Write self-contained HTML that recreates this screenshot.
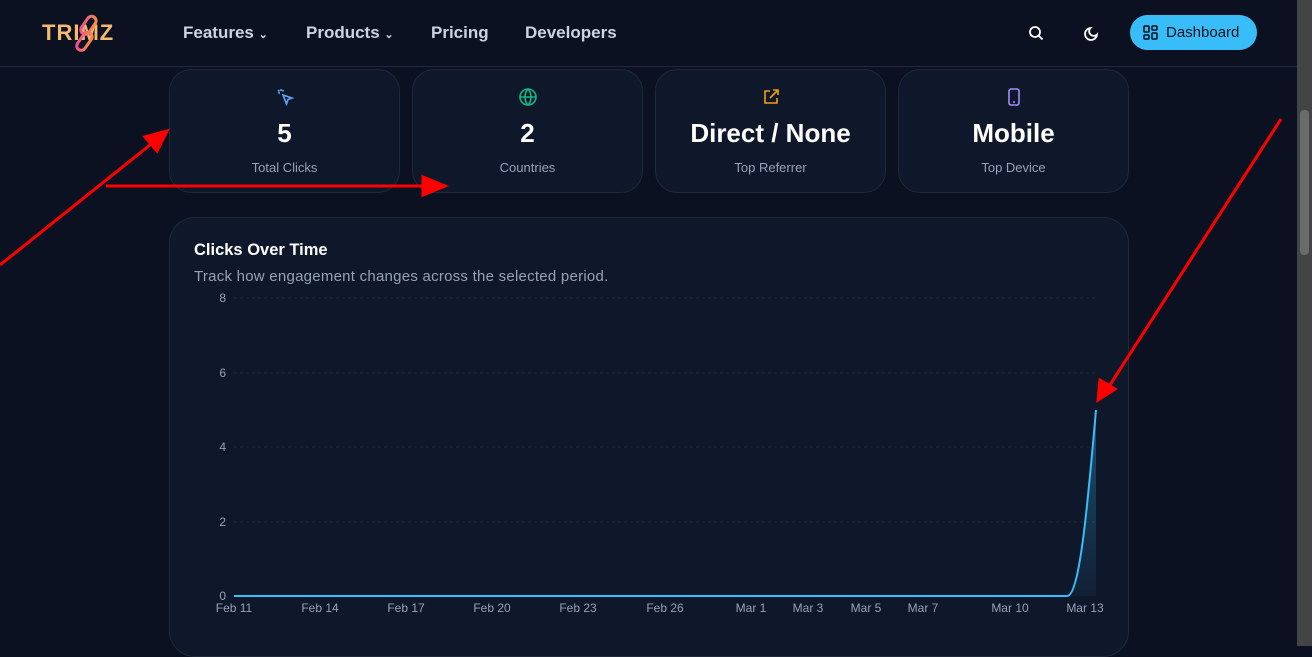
<!DOCTYPE html>
<html><head><meta charset="utf-8"><style>
*{box-sizing:border-box;margin:0;padding:0}
body{width:1312px;height:646px;overflow:hidden;background:#0b1120;font-family:"Liberation Sans",sans-serif;position:relative;color:#fff}
.hdr{position:absolute;left:0;top:0;width:1297px;height:67px;border-bottom:1px solid #1e293b;background:#0b1120}
.logo{position:absolute;left:42px;top:20px;font-weight:bold;font-size:22px;color:#f5b971;letter-spacing:1px}
.nav{position:absolute;top:23px;font-size:17px;color:#cbd5e1;font-weight:bold}
.btn{position:absolute;left:1130px;top:15px;width:127px;height:35px;border-radius:18px;background:#38bdf8;color:#0b1120;font-size:15px;line-height:35px;padding-left:36px}
.card{position:absolute;top:69px;width:231px;height:124px;border:1px solid #1f2937;border-radius:22px;background:#0f172a;text-align:center}
.card .v{position:absolute;top:48px;width:100%;font-size:26px;font-weight:bold}
.card .l{position:absolute;top:90px;width:100%;font-size:13px;color:#94a3b8}
.card svg{position:absolute;top:18px;left:50%;margin-left:-9px}
.chart{position:absolute;left:169px;top:217px;width:960px;height:440px;border:1px solid #1f2937;border-radius:26px;background:#0f172a}
.sb{position:absolute;left:1297px;top:0;width:15px;height:646px;background:#444}
.th{position:absolute;left:1300px;top:110px;width:9px;height:145px;background:#6b6b6b;border-radius:4px}
</style></head><body>
<div class="hdr">
<div class="logo">TRIMZ</div>
<svg style="position:absolute;left:72px;top:14px" width="34" height="40"><defs><linearGradient id="lg" x1="0" y1="1" x2="1" y2="0"><stop offset="0" stop-color="#ec4899"/><stop offset="1" stop-color="#fb923c"/></linearGradient></defs><g fill="none" stroke="url(#lg)" stroke-width="3"><rect x="12" y="1" width="9" height="20" rx="4.5" transform="rotate(35 16 11)"/><rect x="8" y="17" width="9" height="20" rx="4.5" transform="rotate(35 12 27)"/></g></svg>
<div class="nav" style="left:183px">Features <span style="font-size:11px">⌄</span></div>
<div class="nav" style="left:306px">Products <span style="font-size:11px">⌄</span></div>
<div class="nav" style="left:431px">Pricing</div>
<div class="nav" style="left:525px">Developers</div>
<svg style="position:absolute;left:1028px;top:25px" width="16" height="16" fill="none" stroke="#fff" stroke-width="1.8"><circle cx="7" cy="7" r="5"/><path d="M11 11l3.5 3.5"/></svg>
<svg style="position:absolute;left:1084px;top:25px" width="16" height="16" fill="none" stroke="#fff" stroke-width="1.8"><path d="M13 9.5A6 6 0 1 1 6.5 3a4.5 4.5 0 0 0 6.5 6.5z"/></svg>
<div class="btn"><svg style="position:absolute;left:13px;top:10px" width="15" height="15" fill="none" stroke="#0b1120" stroke-width="1.6"><rect x="1" y="1" width="5" height="6" rx="1"/><rect x="9" y="1" width="5" height="4" rx="1"/><rect x="1" y="10" width="5" height="4" rx="1"/><rect x="9" y="8" width="5" height="6" rx="1"/></svg>Dashboard</div>
</div>
<div class="card" style="left:169px"><svg width="18" height="18" fill="none" stroke="#60a5fa" stroke-width="1.6"><path d="M7 7l9 3-4 1.5L10.5 16z"/><path d="M2 5h2M5 1v2M2 2l1.5 1.5M7.5 2L6.5 3.5"/></svg><div class="v">5</div><div class="l">Total Clicks</div></div>
<div class="card" style="left:412px"><svg width="18" height="18" fill="none" stroke="#10b981" stroke-width="1.6"><circle cx="9" cy="9" r="8"/><path d="M1 9h16M9 1c-4 4-4 12 0 16M9 1c4 4 4 12 0 16"/></svg><div class="v">2</div><div class="l">Countries</div></div>
<div class="card" style="left:655px"><svg width="18" height="18" fill="none" stroke="#f59e0b" stroke-width="1.6"><path d="M8 3H3v12h12v-5M11 2h5v5M16 2L8 10"/></svg><div class="v">Direct / None</div><div class="l">Top Referrer</div></div>
<div class="card" style="left:898px"><svg width="18" height="18" fill="none" stroke="#a78bfa" stroke-width="1.6"><rect x="4" y="1" width="10" height="16" rx="2"/><path d="M8 14h2"/></svg><div class="v">Mobile</div><div class="l">Top Device</div></div>
<div class="chart">
<div style="position:absolute;left:24px;top:23px;font-size:16.5px;font-weight:bold">Clicks Over Time</div>
<div style="position:absolute;left:24px;top:50px;font-size:15px;letter-spacing:0.25px;color:#94a3b8">Track how engagement changes across the selected period.</div>
</div>
<svg style="position:absolute;left:0;top:0" width="1312" height="646" font-family="Liberation Sans" font-size="12" fill="#94a3b8">
<defs><linearGradient id="g" x1="0" y1="0" x2="0" y2="1"><stop offset="0" stop-color="#38bdf8" stop-opacity=".35"/><stop offset="1" stop-color="#38bdf8" stop-opacity=".05"/></linearGradient></defs>
<g stroke="#1e293b" stroke-dasharray="3 3"><path d="M234 298H1097M234 373H1097M234 447H1097M234 522H1097"/></g>
<g text-anchor="end"><text x="226" y="302">8</text><text x="226" y="377">6</text><text x="226" y="451">4</text><text x="226" y="526">2</text><text x="226" y="600">0</text></g>
<path d="M1067 596C1080 596 1088 500 1096 410V596Z" fill="url(#g)"/>
<path d="M234 596H1067C1080 596 1088 500 1096 410" fill="none" stroke="#38bdf8" stroke-width="2"/>
<g text-anchor="middle"><text x="234" y="612">Feb 11</text><text x="320" y="612">Feb 14</text><text x="406" y="612">Feb 17</text><text x="492" y="612">Feb 20</text><text x="578" y="612">Feb 23</text><text x="665" y="612">Feb 26</text><text x="751" y="612">Mar 1</text><text x="808" y="612">Mar 3</text><text x="866" y="612">Mar 5</text><text x="923" y="612">Mar 7</text><text x="1010" y="612">Mar 10</text><text x="1085" y="612">Mar 13</text></g>
<g stroke="#f00" stroke-width="3" fill="#f00">
<path d="M0 265L155 141" fill="none"/><path d="M167 131L145 137L157 151Z"/>
<path d="M106 186H425" fill="none"/><path d="M445 186L423 177V195Z"/>
<path d="M1281 119L1108 388" fill="none"/><path d="M1098 400L1100 380L1115 389Z"/>
</g>
</svg>
<div class="sb"></div><div class="th"></div>
</body></html>
